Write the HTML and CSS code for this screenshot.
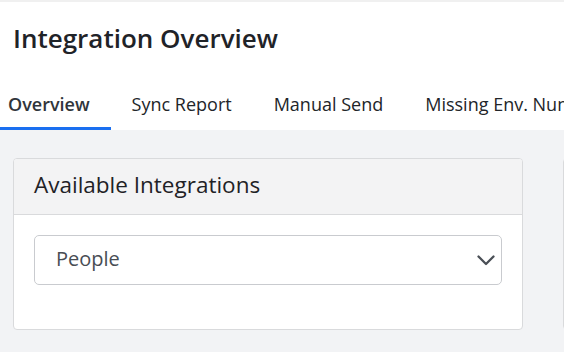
FILE: index.html
```html
<!DOCTYPE html>
<html lang="en">
<head>
    <meta charset="UTF-8">
    <meta name="viewport" content="width=device-width, initial-scale=1.0">
    <title>Integration Overview</title>
    <link rel="stylesheet" href="styles.css">
</head>
<body>

    <!-- Page header -->
    <div class="page-header">
        <h1>Integration Overview</h1>
    </div>

    <!-- Tabs -->
    <div class="tabs">
        <div class="tab active">Overview</div>
        <div class="tab">Sync Report</div>
        <div class="tab">Manual Send</div>
        <div class="tab">Missing Env. Numbers</div>
    </div>

    <!-- Main content -->
    <div class="content">
        <div class="card">
            <div class="card-header">Available Integrations</div>
            <div class="card-body">
                <div class="select">
                    <span>People</span>
                    <svg width="18" height="11" viewBox="0 0 18 11">
                        <path d="M1.5 1.5 L9 9 L16.5 1.5" fill="none" stroke="#4a4f56" stroke-width="2.3" stroke-linecap="round" stroke-linejoin="round"/>
                    </svg>
                </div>
            </div>
        </div>
        <div class="card side-card"></div>
    </div>

</body>
</html>
```

FILE: styles.css
```css
body {
    font-family: 'Open Sans', sans-serif;
    background-color: #f2f3f5;
    margin: 0;
    padding: 0;
    color: #1f2328;
}

.page-header {
    background-color: #ffffff;
    border-top: 2px solid #f0f0f0;
    padding: 20px 13px 0;
    height: 60px;
}

h1 {
    font-size: 26px;
    font-weight: 600;
    margin: 0;
    line-height: 32px;
}

.tabs {
    display: flex;
    background-color: #ffffff;
    height: 48px;
    overflow: hidden;
    white-space: nowrap;
}

.tab {
    padding: 0 21px;
    font-size: 18px;
    line-height: 45px;
    color: #222529;
    border-bottom: 3px solid transparent;
}

.tab:first-child {
    padding-left: 8px;
}

.tab.active {
    font-weight: 600;
    color: #30353b;
    border-bottom-color: #1a6ff0;
}

.content {
    display: flex;
    gap: 40px;
    padding: 28px 0 0 13px;
}

.card {
    width: 508px;
    flex-shrink: 0;
    background-color: #ffffff;
    border: 1px solid #d9dadc;
    border-radius: 4px;
    overflow: hidden;
}

.card-header {
    background-color: #f3f3f4;
    border-bottom: 1px solid #d9dadc;
    height: 51px;
    line-height: 51px;
    padding: 0 20px 4px;
    font-size: 22.5px;
    color: #1f2226;
}

.card-body {
    padding: 20px 20px 40px;
}

.select {
    display: flex;
    align-items: center;
    justify-content: space-between;
    height: 44px;
    border: 1px solid #c9cbcf;
    border-radius: 5px;
    padding: 0 6px 4px 21px;
    font-size: 20px;
    color: #484d54;
}

.select svg {
    margin-top: 4px;
}

.side-card {
    height: 170px;
}
```
